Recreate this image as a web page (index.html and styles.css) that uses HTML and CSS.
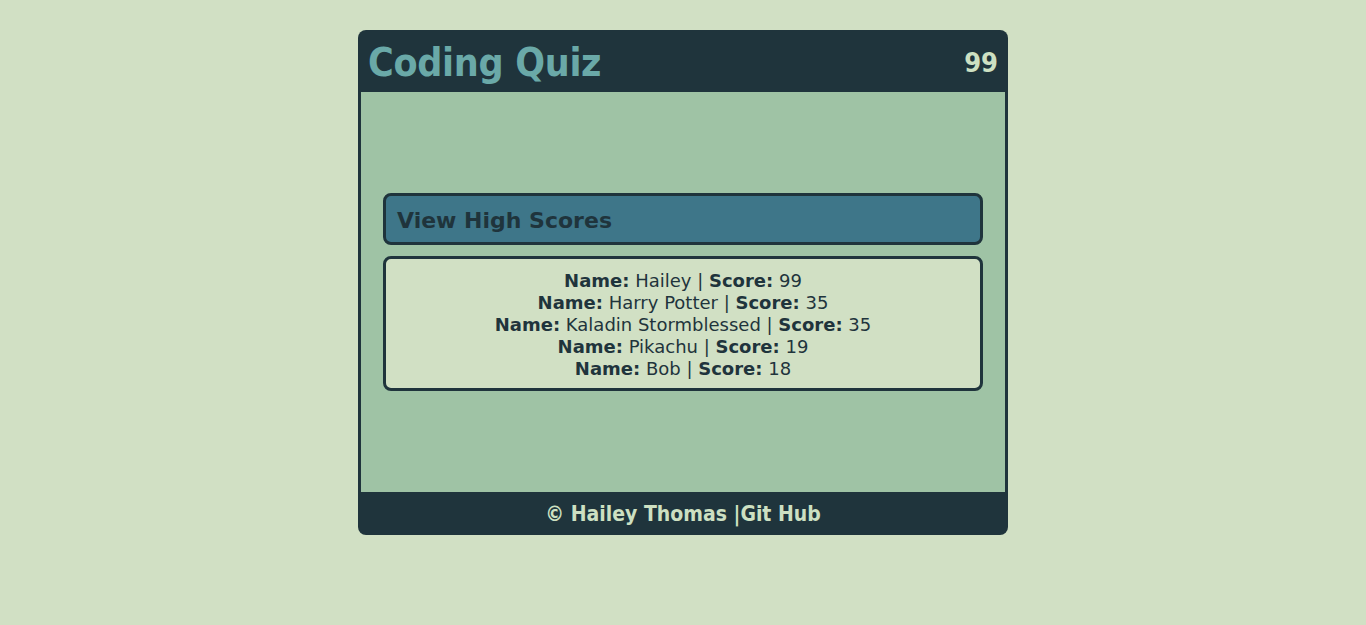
FILE: index.html
```html
<!DOCTYPE html>
<html>
<head>
<meta charset="utf-8">
<link rel="stylesheet" href="styles.css">
</head>
<body>
<div class="quiz">
  <header class="top">
    <h1 class="title">Coding Quiz</h1>
    <span class="timer">99</span>
  </header>
  <main class="main">
    <div class="panel">
      <h2 class="panel-head">View High Scores</h2>
      <ul class="scores">
        <li><b>Name:</b> Hailey | <b>Score:</b> 99</li>
        <li><b>Name:</b> Harry Potter | <b>Score:</b> 35</li>
        <li><b>Name:</b> Kaladin Stormblessed | <b>Score:</b> 35</li>
        <li><b>Name:</b> Pikachu | <b>Score:</b> 19</li>
        <li><b>Name:</b> Bob | <b>Score:</b> 18</li>
      </ul>
    </div>
  </main>
  <footer class="foot">© Hailey Thomas |Git Hub</footer>
</div>
</body>
</html>
```

FILE: styles.css
```css
html, body {
  margin: 0;
  padding: 0;
  background: #d1e0c4;
  font-family: "DejaVu Sans", Verdana, sans-serif;
}
body {
  padding-top: 30px;
}
.quiz {
  width: 650px;
  margin: 0 auto;
  background: #1f343c;
  border-radius: 8px;
  overflow: hidden;
  display: flex;
  flex-direction: column;
}
.top {
  height: 62px;
  display: flex;
  align-items: center;
  justify-content: space-between;
  padding: 2px 10px 0 10px;
  box-sizing: border-box;
}
.title {
  margin: 0;
  font-family: "DejaVu Sans Condensed", "DejaVu Sans", sans-serif;
  font-weight: bold;
  font-size: 39px;
  color: #6aa9a8;
  letter-spacing: -0.3px;
}
.timer {
  font-family: "DejaVu Sans Condensed", "DejaVu Sans", sans-serif;
  font-weight: bold;
  font-size: 27px;
  color: #cde0c2;
}
.main {
  height: 400px;
  margin: 0 3px;
  background: #9fc3a5;
  display: flex;
  flex-direction: column;
  justify-content: center;
  padding: 0 22px;
}
.panel {
  display: flex;
  flex-direction: column;
  gap: 11px;
}
.panel-head {
  margin: 0;
  height: 46px;
  box-sizing: content-box;
  border: 3px solid #1f343c;
  border-radius: 8px;
  background: #3e7689;
  color: #1f343c;
  font-size: 22px;
  font-weight: bold;
  display: flex;
  align-items: center;
  padding: 2px 11px 0;
  height: 44px;
}
.scores {
  margin: 0;
  list-style: none;
  border: 3px solid #1f343c;
  border-radius: 8px;
  background: #d1e0c4;
  color: #1f343c;
  text-align: center;
  font-size: 18px;
  line-height: 22px;
  padding: 11px 10px 8px;
}
.foot {
  height: 43px;
  display: flex;
  align-items: center;
  justify-content: center;
  font-family: "DejaVu Sans Condensed", "DejaVu Sans", sans-serif;
  font-weight: bold;
  font-size: 21px;
  color: #cde0c2;
}
```
